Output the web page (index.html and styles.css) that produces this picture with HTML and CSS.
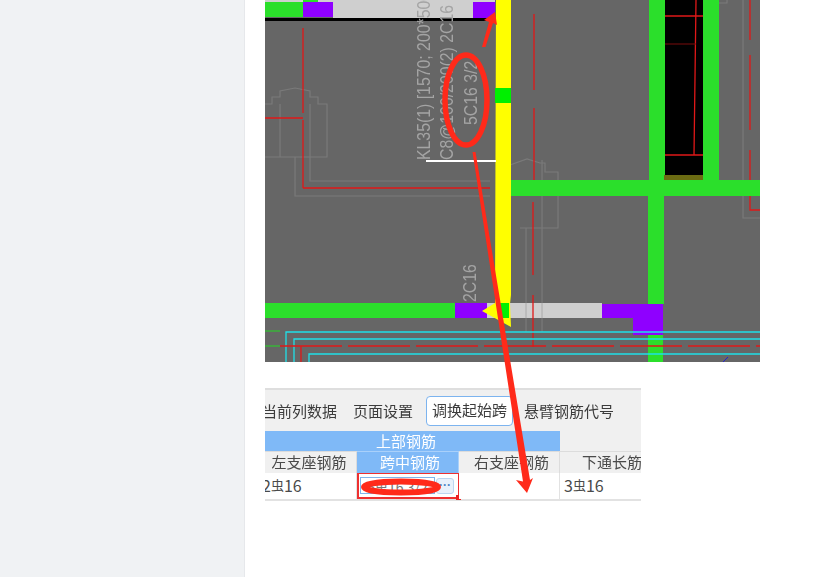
FILE: index.html
```html
<!DOCTYPE html>
<html lang="zh-CN">
<head>
<meta charset="utf-8">
<title>钢筋平法表格</title>
<link rel="stylesheet" href="styles.css">
</head>
<body>
<div class="page">
  <aside class="sidebar"></aside>
  <main class="content">
    <svg class="drawing" width="495" height="362" viewBox="0 0 495 362" xmlns="http://www.w3.org/2000/svg">
      <rect class="bg" width="495" height="362"/>
      <!-- gray outlines -->
      <g class="outline">
        <path d="M0 104H7V97H15V91L30 88L45 91V97H53V104H62V157H0"/>
        <path d="M15 104V157M45 104V181H225M30 157V196H225"/>
        <path d="M245 165L262 159L275 163H280V172H293V228H255"/>
        <path d="M261 228V332M277 160V332"/>
        <path d="M408 0V3H462V0"/>
        <path d="M478 0V218H495"/>
      </g>
      <!-- red axis lines -->
      <g class="red">
        <path d="M38 0V17M38 28V113M38 120V188M0 118H38M38 188H225"/>
        <path d="M269 14V90M269 108V184M268 202V275M268 295V347"/>
        <path d="M485 0V40M485 55V130M485 150V210H495"/>
      </g>
      <!-- top beam -->
      <rect class="lightgray" x="0" y="0" width="230" height="2"/>
      <rect class="green" x="38" y="0" width="15" height="2"/>
      <rect class="green" x="0" y="2" width="38" height="15"/>
      <rect class="purple" x="38" y="2" width="30" height="15"/>
      <rect class="lightgray" x="68" y="2" width="140" height="16"/>
      <rect class="purple" x="208" y="2" width="22" height="16"/>
      <rect class="black" x="0" y="18" width="230" height="3"/>
      <!-- right columns -->
      <rect class="green" x="384" y="0" width="16" height="181"/>
      <rect class="green" x="438" y="0" width="16" height="181"/>
      <rect class="black" x="400" y="0" width="38" height="176"/>
      <rect class="olive" x="399" y="175" width="39" height="6"/>
      <path class="red" d="M431 0L429 155M400 16H438M400 155H438"/>
      <path class="darkred" d="M400 44H431"/>
      <rect class="green" x="245" y="180" width="250" height="16"/>
      <rect class="green" x="383" y="196" width="16" height="108"/>
      <rect class="green" x="383" y="335" width="15" height="27"/>
      <!-- bottom beam -->
      <rect class="green" x="0" y="303" width="190" height="15"/>
      <rect class="purple" x="190" y="303" width="32" height="15"/>
      <rect class="lightgray" x="222" y="303" width="115" height="15"/>
      <path class="purple" d="M337 304H398V335H368V318H337Z"/>
      <path class="outline-light" d="M261 303V318M277 303V318"/>
      <path class="red" d="M268 303V318"/>
      <!-- yellow selected beam -->
      <path class="yellow" d="M231 0H246V295L245 304L246 327L217 311L230 303Z"/>
      <rect class="bright" x="230" y="88" width="16" height="15"/>
      <rect class="bright" x="235" y="303" width="9" height="15"/>
      <rect class="white" x="161" y="160" width="70" height="2"/>
      <!-- cyan and lower lines -->
      <g class="cyan">
        <path d="M21 362V332H495M29 362V339H495M44 362V354H495"/>
      </g>
      <path class="red" stroke-dasharray="62 6" d="M15 346H495"/>
      <path class="red" d="M36 346V362"/>
      <path class="limeline" d="M0 331H15M0 346H15"/>
      <path class="blueline" d="M458 362L463 357"/>
      <!-- annotation -->
      <text class="label" transform="translate(165 160) rotate(-90) scale(0.88 1)">KL35(1) [1570; 200*500]</text>
      <text class="label" transform="translate(188 160) rotate(-90) scale(0.88 1)">C8@100/200(2) 2C16</text>
      <text class="label" transform="translate(212 125) rotate(-90) scale(0.88 1)">5C16 3/2</text>
      <text class="label" transform="translate(211 302) rotate(-90) scale(0.88 1)">2C16</text>
    </svg>

    <section class="panel">
      <div class="toolbar">
        <span class="tool tool-first">当前列数据</span>
        <span class="tool">页面设置</span>
        <span class="tool tool-active">调换起始跨</span>
        <span class="tool tool-last">悬臂钢筋代号</span>
      </div>
      <div class="grid">
        <div class="cell group">上部钢筋</div>
        <div class="cell head head-blank"></div>
        <div class="cell head head-left">左支座钢筋</div>
        <div class="cell head head-on">跨中钢筋</div>
        <div class="cell head head-right">右支座钢筋</div>
        <div class="cell head head-clip">下通长筋</div>
        <div class="cell data data-clip">2<i class="bar">虫</i>16</div>
        <div class="cell data data-on">
          <span class="input">5<i class="bar">虫</i>16 3/2</span>
          <span class="more">···</span>
          <span class="handle"></span>
        </div>
        <div class="cell data"></div>
        <div class="cell data data-last">3<i class="bar">虫</i>16</div>
      </div>
    </section>
  </main>

  <svg class="marks" width="826" height="577" viewBox="0 0 826 577" xmlns="http://www.w3.org/2000/svg">
    <ellipse class="ring" cx="466" cy="100" rx="21" ry="45"/>
    <ellipse class="ring ring-flat" cx="401" cy="487" rx="37" ry="5.5"/>
    <path class="arrow-fill" d="M482 47L489 22L484 20L495 12L497 25L493 23L485.5 47Z"/>
    <path class="arrow-fill" d="M472.5 152L475.5 152L530 480L533 478L527 493L516 480L523 481.5Z"/>
  </svg>
</div>
</body>
</html>
```
FILE: styles.css
```css
html, body {
  margin: 0;
  padding: 0;
  background: #fff;
}
.page {
  position: relative;
  display: flex;
  width: 826px;
  height: 577px;
  overflow: hidden;
  font-family: "Noto Sans CJK SC", "Liberation Sans", sans-serif;
}
.sidebar {
  width: 244px;
  flex: none;
  background: #f0f2f4;
  border-right: 1px solid #e6e8eb;
}
.content {
  flex: 1;
  display: flex;
  flex-direction: column;
  gap: 26px;
  padding-left: 20px;
}
.drawing {
  display: block;
  filter: blur(0.3px);
}
.bg { fill: #666; }
.green { fill: #2bdf2b; }
.purple { fill: #8f00ff; }
.lightgray { fill: #cfcfcf; }
.black { fill: #000; }
.olive { fill: #6b6b12; }
.yellow { fill: #ffff00; }
.bright { fill: #00f000; }
.white { fill: #fff; }
.outline { fill: none; stroke: #7a7a7a; stroke-width: 1.2; }
.outline-light { fill: none; stroke: #aaa; stroke-width: 1; }
.red { fill: none; stroke: #e01818; stroke-width: 1.3; }
.darkred { fill: none; stroke: #7a0d0d; stroke-width: 1; }
.cyan { fill: none; stroke: #1fe0e8; stroke-width: 1.3; }
.limeline { fill: none; stroke: #22d822; stroke-width: 1; }
.blueline { fill: none; stroke: #2222cc; stroke-width: 1; }
.label {
  fill: #a4a4a4;
  font-family: "Liberation Sans", sans-serif;
  font-size: 18px;
}
.panel {
  width: 376px;
  filter: blur(0.35px);
  overflow: hidden;
}
.toolbar {
  height: 41px;
  display: flex;
  align-items: center;
  gap: 13px;
  background: #f0f0f0;
  border-top: 2px solid #dedede;
}
.tool {
  flex: none;
  font-size: 15px;
  line-height: 20px;
  color: #3c3c3c;
  white-space: nowrap;
}
.tool-first { margin-left: -3px; margin-right: 3px; }
.tool-last { margin-left: -2px; }
.tool-active {
  box-sizing: border-box;
  height: 30px;
  width: 87px;
  line-height: 26px;
  text-align: center;
  background: #fff;
  border: 1.5px solid #7db4ef;
  border-radius: 4px;
}
.grid {
  display: grid;
  grid-template-columns: 92px 102px 101px 81px;
  grid-template-rows: 20px 22px 26px;
  border-bottom: 2px solid #e2e2e2;
}
.cell {
  box-sizing: border-box;
  font-size: 15px;
  color: #4a4a4a;
  text-align: center;
  white-space: nowrap;
  overflow: hidden;
}
.group {
  grid-column: span 3;
  background: #7fb9f7;
  color: #fff;
  line-height: 20px;
  padding-right: 13px;
}
.head {
  background: #f0f0f0;
  border-right: 1px solid #dcdcdc;
  border-top: 1px solid #dcdcdc;
  line-height: 20px;
}
.head-blank { border-top: 0; border-right: 0; }
.head-left { padding-right: 3px; }
.head-right { padding-left: 5px; }
.head-on {
  background: #7fb9f7;
  color: #fff;
  border-right: 1px solid #a9d0fa;
  border-top-color: #a9d0fa;
  padding-left: 5px;
}
.head-clip { text-align: left; padding-left: 22px; border-right: 0; }
.data {
  position: relative;
  font-size: 16px;
  background: #fff;
  border-right: 1px solid #e2e2e2;
  line-height: 23px;
  text-align: left;
  overflow: visible;
}
.data-clip { margin-left: -3px; }
.data-last { padding-left: 4px; border-right: 0; }
.bar { font-style: normal; font-size: 13px; vertical-align: 2px; }
.data-on {
  display: flex;
  align-items: center;
  gap: 1px;
  padding: 0 3px 0 1px;
  border: 2px solid #ee3030;
  border-top-width: 1px;
  border-right-width: 1px;
}
.input {
  box-sizing: border-box;
  width: 75px;
  height: 17px;
  line-height: 15px;
  text-align: center;
  border: 1px solid #7fb5ec;
  font-size: 14px;
  color: #777;
  overflow: hidden;
}
.more {
  box-sizing: border-box;
  width: 18px;
  height: 16px;
  line-height: 12px;
  text-align: center;
  font-family: "Liberation Sans", sans-serif;
  font-weight: bold;
  font-size: 12px;
  color: #4f86c4;
  background: #e8f1fb;
  border: 1px solid #bcd6f0;
  border-radius: 3px;
}
.handle {
  position: absolute;
  right: -3px;
  bottom: -3px;
  width: 5px;
  height: 5px;
  background: #ee2020;
}
.marks {
  position: absolute;
  left: 0;
  top: 0;
  pointer-events: none;
}
.ring { fill: none; stroke: #ff2a1a; stroke-width: 5.5; }
.ring-flat { stroke-width: 6; }
.arrow-fill { fill: #ff2a1a; }
```
